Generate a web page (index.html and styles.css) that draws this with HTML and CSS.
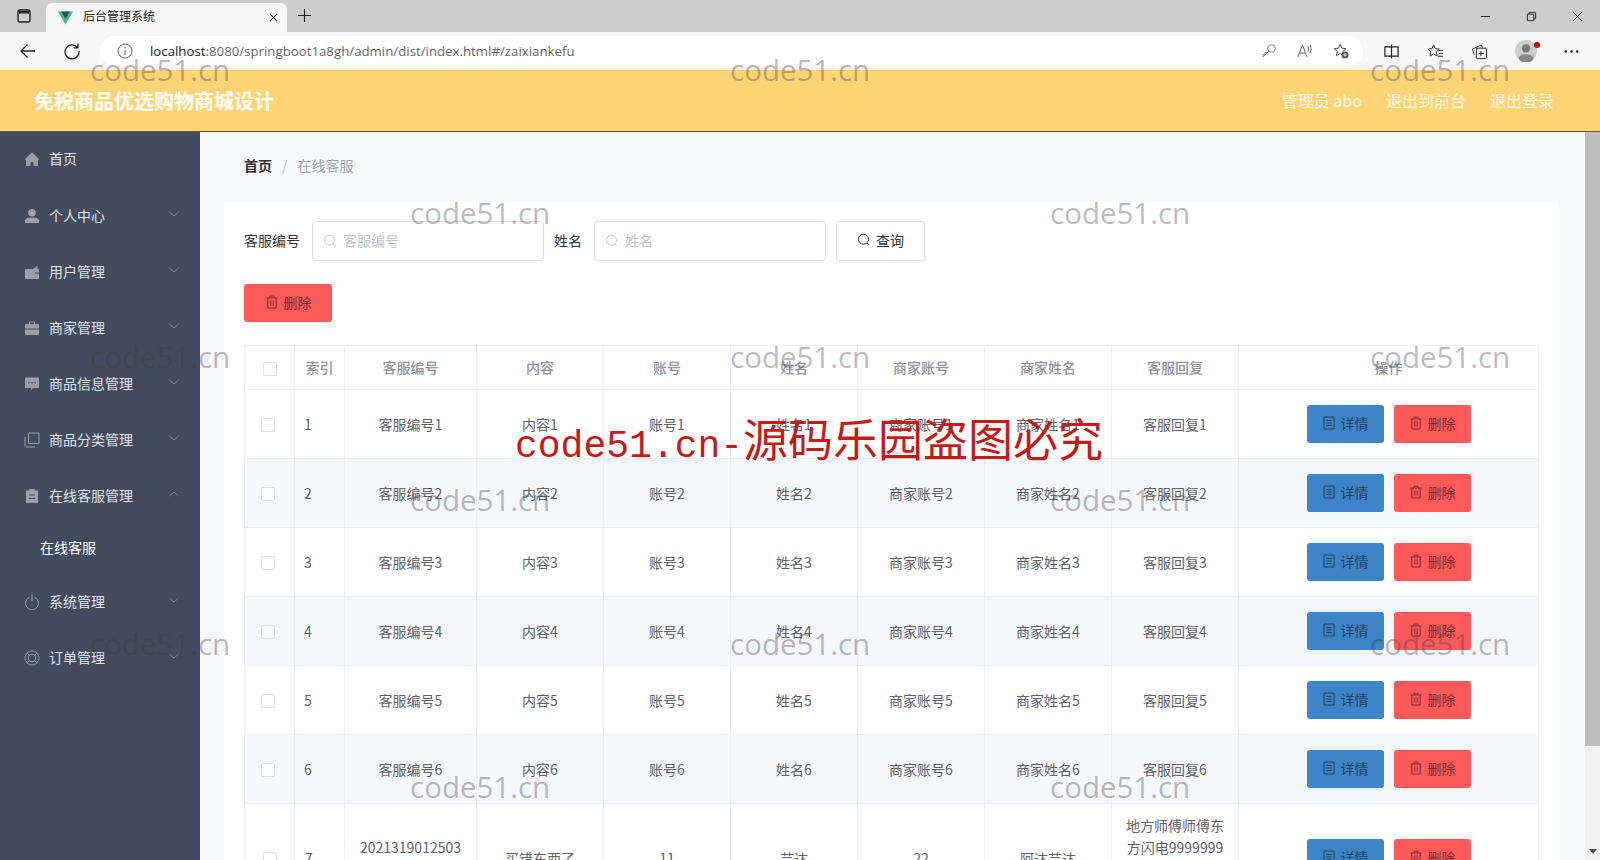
FILE: index.html
```html
<!DOCTYPE html>
<html lang="zh-CN">
<head>
    <meta charset="UTF-8">
    <title>后台管理系统</title>
    <link rel="stylesheet" href="styles.css">
</head>
<body>

    <svg class="sprites" width="0" height="0">
        <symbol id="i-search" viewBox="0 0 14 14"><circle cx="6.5" cy="6.2" r="5" fill="none" stroke="currentColor"/><path d="M10 10l2 2.4" fill="none" stroke="currentColor"/></symbol>
        <symbol id="i-trash" viewBox="0 0 14 14"><path d="M1.5 3h11M5 3V1.2h4V3M2.8 3v10h8.400V3M5.800 5.500v5M8.200 5.500v5" fill="none" stroke="currentColor"/></symbol>
        <symbol id="i-doc" viewBox="0 0 14 14"><path d="M2 1h10v12H2zM4.500 4.500h5M4.500 7h5M4.500 9.500h5" fill="none" stroke="currentColor"/></symbol>
        <symbol id="i-down" viewBox="0 0 12 12"><path d="M1.500 4l4.500 4 4.500-4" fill="none" stroke="currentColor"/></symbol>
    </svg>

    <div class="tabbar">
        <svg class="win-icon" viewBox="0 0 16 16"><rect x="2" y="2" width="12" height="12" rx="2" fill="none" stroke="#222" stroke-width="1.400"/><path d="M3 3h10v2.500H3z" fill="#222"/></svg>
        <div class="tab">
            <svg class="tab-logo" viewBox="0 0 16 14"><path d="M0 0h16L8 14z" fill="#41b883"/><path d="M3.500 0h9L8 7.800z" fill="#35495e"/></svg>
            <span class="tab-title">后台管理系统</span>
            <svg class="tab-close" viewBox="0 0 10 10"><path d="M1 1l8 8M9 1L1 9" stroke="#222" stroke-width="1.200"/></svg>
        </div>
        <svg class="tab-new" viewBox="0 0 16 16"><path d="M8 1v14M1 8h14" stroke="#222" stroke-width="1.200"/></svg>
        <div class="win-controls">
            <svg viewBox="0 0 12 12"><path d="M1 6h10" stroke="#222"/></svg>
            <svg viewBox="0 0 12 12"><path d="M1.500 3.500h7v7h-7zM3.500 3.500v-2h7v7h-2" fill="none" stroke="#222"/></svg>
            <svg viewBox="0 0 12 12"><path d="M1 1l10 10M11 1L1 11" stroke="#222"/></svg>
        </div>
    </div>

    <div class="toolbar">
        <svg class="nav-icon" viewBox="0 0 18 18"><path d="M16 9H2M8.500 2.500L2 9l6.500 6.500" fill="none" stroke="#222" stroke-width="1.300"/></svg>
        <svg class="nav-icon" viewBox="0 0 18 18"><path d="M14.500 5.500A7 7 0 1 0 16 9M15 1.500v4.300h-4.300" fill="none" stroke="#222" stroke-width="1.300"/></svg>
        <div class="address">
            <svg class="addr-info" viewBox="0 0 16 16"><circle cx="8" cy="8" r="7" fill="none" stroke="#555"/><path d="M8 7v5M8 4v1.500" stroke="#555"/></svg>
            <span class="addr-url"><b>localhost</b>:8080/springboot1a8gh/admin/dist/index.html#/zaixiankefu</span>
            <div class="addr-tools">
                <svg viewBox="0 0 16 16"><circle cx="10.500" cy="5.500" r="3.800" fill="none" stroke="#888"/><path d="M7.800 8.200L2 14v-2.500h2v-2h2" fill="none" stroke="#888"/></svg>
                <svg viewBox="0 0 16 16"><path d="M1 14L5.500 2 10 14M2.800 10h5.400M11 3.500a5 5 0 0 1 0 5M13 2a7 7 0 0 1 0 8" fill="none" stroke="#666"/></svg>
                <svg viewBox="0 0 18 18"><path d="M8 1.500l2 4.300 4.600.6-3.400 3.200.9 4.600L8 11.900l-4.100 2.300.9-4.600L1.400 6.400 6 5.800z" fill="none" stroke="#333"/><circle cx="13.500" cy="13.500" r="4" fill="#555"/><path d="M11.500 13.500h4M13.500 11.500v4" stroke="#fff"/></svg>
            </div>
        </div>
        <div class="tool-icons">
            <svg viewBox="0 0 18 18"><path d="M2 4h14v10H2zM9 1.500v15" fill="none" stroke="#222" stroke-width="1.300"/></svg>
            <svg viewBox="0 0 18 18"><path d="M7 2l1.800 4 4.200.5-3.100 2.900.8 4.300L7 11.600l-3.700 2.100.8-4.300L1 6.500 5.200 6zM12 8h5M12.500 11h4.500M11.500 14h5.500" fill="none" stroke="#222"/></svg>
            <svg viewBox="0 0 18 18"><path d="M6 5.500h9.500a1 1 0 0 1 1 1v9a1 1 0 0 1-1 1H6.500a1 1 0 0 1-1-1zM10.500 8.500v5.500M8 11.200h5.500M3.500 12.500l-2-6L11 2l1.200 3" fill="none" stroke="#222"/></svg>
            <span class="profile"><svg viewBox="0 0 24 24"><circle cx="12" cy="12" r="12" fill="#ccc"/><circle cx="12" cy="9" r="4.500" fill="#777"/><ellipse cx="12" cy="20" rx="8" ry="4.500" fill="#888"/></svg><i class="profile-dot"></i></span>
            <svg class="tool-more" viewBox="0 0 18 18"><circle cx="3" cy="9" r="1.300" fill="#222"/><circle cx="9" cy="9" r="1.300" fill="#222"/><circle cx="15" cy="9" r="1.300" fill="#222"/></svg>
        </div>
    </div>

    <header class="app-header">
        <div class="app-title">免税商品优选购物商城设计</div>
        <nav class="app-links">
            <span>管理员 abo</span>
            <span>退出到前台</span>
            <span>退出登录</span>
        </nav>
    </header>

    <div class="app-body">
        <aside class="sidebar">
            <div class="menu-item">
                <svg class="menu-icon" viewBox="0 0 16 16"><path d="M8 1.500L.5 8.500 2 9v6h4.500v-4h3v4H14V9l1.500-.5z" fill="currentColor"/></svg>
                <span>首页</span>
            </div>
            <div class="menu-item">
                <svg class="menu-icon" viewBox="0 0 16 16"><circle cx="8" cy="4.800" r="3.800" fill="currentColor"/><path d="M1 15v-2.500C1 10.500 3 9.500 8 9.500s7 1 7 3V15z" fill="currentColor"/></svg>
                <span>个人中心</span>
                <svg class="menu-arrow"><use href="#i-down"/></svg>
            </div>
            <div class="menu-item">
                <svg class="menu-icon" viewBox="0 0 16 16"><path d="M1 5h8l4-3 1 3h1v10H1z" fill="currentColor"/><path d="M11 9h4" stroke="#434c5e"/></svg>
                <span>用户管理</span>
                <svg class="menu-arrow"><use href="#i-down"/></svg>
            </div>
            <div class="menu-item">
                <svg class="menu-icon" viewBox="0 0 16 16"><path d="M5 4V1.500h6V4h4v4.500H1V4zM6 4h4V2.500H6zM1 9.500h14V15H1z" fill="currentColor" fill-rule="evenodd"/></svg>
                <span>商家管理</span>
                <svg class="menu-arrow"><use href="#i-down"/></svg>
            </div>
            <div class="menu-item">
                <svg class="menu-icon" viewBox="0 0 16 16"><path d="M1 1.500h14V12H9l-2 2.500V12H1z" fill="currentColor"/><path d="M4 6.800h1.500M7.300 6.800h1.500M10.500 6.800H12" stroke="#434c5e" stroke-width="1.500"/></svg>
                <span>商品信息管理</span>
                <svg class="menu-arrow"><use href="#i-down"/></svg>
            </div>
            <div class="menu-item">
                <svg class="menu-icon" viewBox="0 0 16 16"><path d="M4.500 1h10.500v10.500H4.500zM1 5v8.500a1.500 1.500 0 0 0 1.500 1.500H11" fill="none" stroke="currentColor"/></svg>
                <span>商品分类管理</span>
                <svg class="menu-arrow"><use href="#i-down"/></svg>
            </div>
            <div class="menu-item">
                <svg class="menu-icon" viewBox="0 0 16 16"><path d="M2 2.500h3V1h6v1.500h3V15H2z" fill="currentColor"/><path d="M5 7h6M5 10.500h6" stroke="#434c5e"/></svg>
                <span>在线客服管理</span>
                <svg class="menu-arrow menu-arrow-up"><use href="#i-down"/></svg>
            </div>
            <div class="submenu-item">在线客服</div>
            <div class="menu-item">
                <svg class="menu-icon" viewBox="0 0 16 16"><path d="M5 3.500a6.500 6.500 0 1 0 6 0M8 .5v7" fill="none" stroke="currentColor"/></svg>
                <span>系统管理</span>
                <svg class="menu-arrow"><use href="#i-down"/></svg>
            </div>
            <div class="menu-item">
                <svg class="menu-icon" viewBox="0 0 16 16"><circle cx="8" cy="8" r="7" fill="none" stroke="currentColor"/><circle cx="8" cy="8" r="3.800" fill="none" stroke="currentColor"/><path d="M3 3l2.300 2.300M13 3l-2.300 2.300M3 13l2.300-2.300M13 13l-2.300-2.300" stroke="currentColor"/></svg>
                <span>订单管理</span>
                <svg class="menu-arrow"><use href="#i-down"/></svg>
            </div>
        </aside>

        <main class="content">
            <div class="breadcrumb">
                <b>首页</b>
                <i>/</i>
                <span>在线客服</span>
            </div>

            <section class="card">
                <form class="search-form">
                    <label>客服编号</label>
                    <div class="search-input">
                        <svg class="ico"><use href="#i-search"/></svg>
                        <span>客服编号</span>
                    </div>
                    <label>姓名</label>
                    <div class="search-input">
                        <svg class="ico"><use href="#i-search"/></svg>
                        <span>姓名</span>
                    </div>
                    <button type="button" class="btn btn-plain btn-search"><svg class="ico"><use href="#i-search"/></svg>查询</button>
                </form>

                <div class="bulk-actions">
                    <button type="button" class="btn btn-red"><svg class="ico"><use href="#i-trash"/></svg>删除</button>
                </div>

                <table class="data-table">
                    <colgroup>
                        <col class="col-check">
                        <col class="col-index">
                        <col class="col-code">
                        <col class="col-std">
                        <col class="col-std">
                        <col class="col-std">
                        <col class="col-std">
                        <col class="col-std">
                        <col class="col-std">
                        <col class="col-ops">
                    </colgroup>
                    <thead>
                        <tr>
                            <th><span class="checkbox"></span></th>
                            <th>索引</th>
                            <th>客服编号</th>
                            <th>内容</th>
                            <th>账号</th>
                            <th>姓名</th>
                            <th>商家账号</th>
                            <th>商家姓名</th>
                            <th>客服回复</th>
                            <th>操作</th>
                        </tr>
                    </thead>
                    <tbody>
                        <tr>
                            <td class="cell-check"><span class="checkbox"></span></td>
                            <td class="cell-index">1</td>
                            <td>客服编号1</td><td>内容1</td><td>账号1</td><td>姓名1</td><td>商家账号1</td><td>商家姓名1</td><td>客服回复1</td>
                            <td><button type="button" class="btn btn-blue"><svg class="ico"><use href="#i-doc"/></svg>详情</button><button type="button" class="btn btn-red"><svg class="ico"><use href="#i-trash"/></svg>删除</button></td>
                        </tr>
                        <tr>
                            <td class="cell-check"><span class="checkbox"></span></td>
                            <td class="cell-index">2</td>
                            <td>客服编号2</td><td>内容2</td><td>账号2</td><td>姓名2</td><td>商家账号2</td><td>商家姓名2</td><td>客服回复2</td>
                            <td><button type="button" class="btn btn-blue"><svg class="ico"><use href="#i-doc"/></svg>详情</button><button type="button" class="btn btn-red"><svg class="ico"><use href="#i-trash"/></svg>删除</button></td>
                        </tr>
                        <tr>
                            <td class="cell-check"><span class="checkbox"></span></td>
                            <td class="cell-index">3</td>
                            <td>客服编号3</td><td>内容3</td><td>账号3</td><td>姓名3</td><td>商家账号3</td><td>商家姓名3</td><td>客服回复3</td>
                            <td><button type="button" class="btn btn-blue"><svg class="ico"><use href="#i-doc"/></svg>详情</button><button type="button" class="btn btn-red"><svg class="ico"><use href="#i-trash"/></svg>删除</button></td>
                        </tr>
                        <tr>
                            <td class="cell-check"><span class="checkbox"></span></td>
                            <td class="cell-index">4</td>
                            <td>客服编号4</td><td>内容4</td><td>账号4</td><td>姓名4</td><td>商家账号4</td><td>商家姓名4</td><td>客服回复4</td>
                            <td><button type="button" class="btn btn-blue"><svg class="ico"><use href="#i-doc"/></svg>详情</button><button type="button" class="btn btn-red"><svg class="ico"><use href="#i-trash"/></svg>删除</button></td>
                        </tr>
                        <tr>
                            <td class="cell-check"><span class="checkbox"></span></td>
                            <td class="cell-index">5</td>
                            <td>客服编号5</td><td>内容5</td><td>账号5</td><td>姓名5</td><td>商家账号5</td><td>商家姓名5</td><td>客服回复5</td>
                            <td><button type="button" class="btn btn-blue"><svg class="ico"><use href="#i-doc"/></svg>详情</button><button type="button" class="btn btn-red"><svg class="ico"><use href="#i-trash"/></svg>删除</button></td>
                        </tr>
                        <tr>
                            <td class="cell-check"><span class="checkbox"></span></td>
                            <td class="cell-index">6</td>
                            <td>客服编号6</td><td>内容6</td><td>账号6</td><td>姓名6</td><td>商家账号6</td><td>商家姓名6</td><td>客服回复6</td>
                            <td><button type="button" class="btn btn-blue"><svg class="ico"><use href="#i-doc"/></svg>详情</button><button type="button" class="btn btn-red"><svg class="ico"><use href="#i-trash"/></svg>删除</button></td>
                        </tr>
                        <tr class="row-long">
                            <td class="cell-check"><span class="checkbox"></span></td>
                            <td class="cell-index">7</td>
                            <td>2021319012503<br>&nbsp;</td><td>买错东西了</td><td>11</td><td>芸达</td><td>22</td><td>阿达芸达</td><td>地方师傅师傅东<br>方闪电9999999<br>&nbsp;<br>&nbsp;</td>
                            <td><button type="button" class="btn btn-blue"><svg class="ico"><use href="#i-doc"/></svg>详情</button><button type="button" class="btn btn-red"><svg class="ico"><use href="#i-trash"/></svg>删除</button></td>
                        </tr>
                    </tbody>
                </table>
            </section>
        </main>

        <div class="scrollbar">
            <div class="scrollbar-thumb"></div>
            <div class="scrollbar-arrow"></div>
        </div>
    </div>

    <!-- watermark stamped over the screenshot -->
    <div class="marks">
        <span class="mark mark-a">code51.cn</span>
        <span class="mark mark-b">code51.cn</span>
        <span class="mark mark-c">code51.cn</span>
        <span class="mark mark-d">code51.cn</span>
        <span class="mark mark-e">code51.cn</span>
        <span class="mark mark-f">code51.cn</span>
        <span class="mark mark-g">code51.cn</span>
        <span class="mark mark-h">code51.cn</span>
        <span class="mark mark-i">code51.cn</span>
        <span class="mark mark-j">code51.cn</span>
        <span class="mark mark-k">code51.cn</span>
        <span class="mark mark-l">code51.cn</span>
        <span class="mark mark-m">code51.cn</span>
        <span class="mark mark-n">code51.cn</span>
        <span class="mark mark-o">code51.cn</span>
        <span class="mark-big"><em>code51.cn-</em>源码乐园盗图必究</span>
    </div>

</body>
</html>
```

FILE: styles.css
```css
* {
    box-sizing: border-box;
}
html,
body {
    margin: 0;
    padding: 0;
    height: 860px;
    overflow: hidden;
}
body {
    display: flex;
    flex-direction: column;
    position: relative;
    font-family: "Noto Sans CJK SC", "Noto Sans", sans-serif;
    font-size: 14px;
    color: #606266;
    background-color: #f7f8fa;
}
.sprites {
    position: absolute;
}

/* browser chrome */
.tabbar {
    display: flex;
    align-items: flex-end;
    flex: 0 0 32px;
    background-color: #cdcdcd;
}
.win-icon {
    width: 16px;
    height: 16px;
    margin: 0 14px 8px 16px;
}
.tab {
    display: flex;
    align-items: center;
    width: 241px;
    height: 29px;
    padding: 0 7px 0 12px;
    background-color: #f7f7f7;
    border-radius: 6px 6px 0 0;
    color: #222;
}
.tab-logo {
    width: 15px;
    height: 14px;
}
.tab-title {
    flex: 1;
    margin: 0 0 4px 10px;
    font-size: 12px;
}
.tab-close {
    width: 9px;
    height: 9px;
    margin-right: 2px;
}
.tab-new {
    width: 15px;
    height: 15px;
    margin: 0 0 9px 10px;
}
.win-controls {
    display: flex;
    gap: 35px;
    margin: 0 17px 10px auto;
}
.win-controls svg {
    width: 11px;
    height: 11px;
}
.toolbar {
    display: flex;
    align-items: center;
    flex: 0 0 38px;
    background-color: #f7f7f7;
    padding-left: 19px;
}
.nav-icon {
    flex: none;
    width: 18px;
    height: 18px;
    margin-right: 26px;
}
.address {
    display: flex;
    align-items: center;
    flex: none;
    width: 1263px;
    height: 30px;
    margin-left: -7px;
    padding: 0 14px 0 17px;
    background-color: #fff;
    border-radius: 15px;
}
.addr-info {
    width: 16px;
    height: 16px;
}
.addr-url {
    margin-left: 17px;
    font-family: "Open Sans", "Noto Sans", sans-serif;
    font-size: 13.25px;
    color: #666;
}
.addr-url b {
    font-weight: 400;
    color: #222;
}
.addr-tools {
    display: flex;
    align-items: center;
    gap: 20px;
    margin-left: auto;
}
.addr-tools svg {
    width: 16px;
    height: 16px;
}
.tool-icons {
    display: flex;
    align-items: center;
    margin-left: 20px;
}
.tool-icons svg {
    width: 17px;
    height: 17px;
    margin-right: 27px;
}
.tool-icons .profile {
    display: block;
    position: relative;
    width: 22px;
    height: 22px;
    margin-right: 26px;
}
.profile svg {
    display: block;
    width: 22px;
    height: 22px;
}
.profile-dot {
    position: absolute;
    right: -3px;
    top: 2px;
    width: 6px;
    height: 6px;
    border-radius: 50%;
    background-color: #c00;
}
.tool-icons .tool-more {
    margin-right: 0;
}

/* app header */
.app-header {
    display: flex;
    align-items: center;
    justify-content: space-between;
    flex: 0 0 62px;
    padding: 0 46px 0 34px;
    background-color: #ffd476;
    border-bottom: 1px solid #6b5a35;
    color: #fff;
}
.app-title {
    font-size: 20px;
    font-weight: 700;
}
.app-links {
    display: flex;
    gap: 24px;
    margin-bottom: 2px;
    font-size: 16px;
    color: rgba(255, 255, 255, 0.85);
}

/* layout */
.app-body {
    display: flex;
    flex: 1;
    min-height: 0;
}
.sidebar {
    flex: 0 0 200px;
    background-color: #434c5e;
    color: #dfe3ea;
}
.menu-item {
    display: flex;
    align-items: center;
    height: 56px;
    padding: 0 20px 0 24px;
}
.menu-item:first-child {
    padding-bottom: 2px;
}
.menu-item span {
    flex: 1;
    margin-left: 9px;
    padding-bottom: 2px;
}
.menu-icon {
    width: 16px;
    height: 16px;
    color: #9a9ea7;
}
.menu-arrow {
    width: 12px;
    height: 12px;
    margin-top: -4px;
    color: #7f8694;
}
.menu-arrow-up {
    transform: rotate(180deg);
}
.submenu-item {
    height: 50px;
    padding-left: 40px;
    line-height: 46px;
    color: #fff;
}
.content {
    flex: 1;
    min-width: 0;
    padding: 0 26px 0 24px;
    overflow: hidden;
}
.breadcrumb {
    display: flex;
    align-items: center;
    gap: 10px;
    height: 69px;
    padding: 0 0 4px 20px;
    color: #97a8be;
}
.breadcrumb b {
    color: #303133;
}
.breadcrumb i {
    font-style: normal;
    color: #c0c4cc;
}
.card {
    padding: 20px;
    background-color: #fff;
}
.search-form {
    display: flex;
    align-items: center;
    height: 40px;
}
.search-form label {
    margin-right: 12px;
    padding-bottom: 2px;
    color: #303133;
}
.search-input {
    display: flex;
    align-items: center;
    gap: 6px;
    width: 232px;
    height: 40px;
    margin-right: 10px;
    padding: 0 10px;
    border: 1px solid #dcdfe6;
    border-radius: 4px;
    color: #c0c4cc;
}
.search-input span {
    padding-bottom: 2px;
}
.ico {
    width: 14px;
    height: 14px;
    flex: none;
}
.btn {
    display: inline-flex;
    align-items: center;
    justify-content: center;
    gap: 5px;
    width: 77px;
    height: 38px;
    padding: 0 0 2px;
    border: 1px solid transparent;
    border-radius: 3px;
    font-family: inherit;
    font-size: 14px;
}
.btn-plain {
    background-color: #fff;
    border-color: #dcdfe6;
    color: #303133;
}
.btn-search {
    width: 89px;
    height: 40px;
}
.btn-red {
    background-color: #ff5a5a;
    color: #7d2b33;
}
.btn-blue {
    background-color: #3d85c6;
    color: #1f3f61;
}
.bulk-actions {
    margin-top: 23px;
}
.bulk-actions .btn {
    width: 88px;
}
.data-table {
    width: 1294px;
    margin-top: 23px;
    border-collapse: collapse;
    table-layout: fixed;
    border: 1px solid #ebeef5;
}
.col-check {
    width: 50px;
}
.col-index {
    width: 50px;
}
.col-code {
    width: 132px;
}
.col-std {
    width: 127px;
}
.col-ops {
    width: 300px;
}
.data-table th,
.data-table td {
    border: 1px solid #ebeef5;
    text-align: center;
    line-height: 22px;
}
.data-table th {
    height: 44px;
    padding: 0 8px 2px;
    font-weight: 500;
    color: #909399;
}
.data-table td {
    height: 69px;
    padding: 12px 10px;
}
.data-table .row-long td {
    padding: 10px 10px 14px;
}
.data-table tbody tr:nth-child(even) td {
    background-color: #f5f7fa;
}
.data-table .btn + .btn {
    margin-left: 10px;
}
.data-table .cell-index {
    padding-left: 9px;
    text-align: left;
}
.data-table .cell-check {
    padding-right: 14px;
}
.cell-check .checkbox {
    margin-bottom: 2px;
}
.checkbox {
    display: inline-block;
    width: 14px;
    height: 14px;
    vertical-align: middle;
    background-color: #fff;
    border: 1px solid #dcdfe6;
    border-radius: 2px;
}

/* fake page scrollbar */
.scrollbar {
    position: relative;
    flex: 0 0 15px;
    background-color: #f1f1f1;
}
.scrollbar-thumb {
    height: 614px;
    background-color: #bdbdbd;
}
.scrollbar-arrow {
    position: absolute;
    left: 4px;
    bottom: 6px;
    border-style: solid;
    border-width: 5px 4px 0;
    border-color: #505050 transparent transparent;
}

/* watermark */
.marks {
    position: absolute;
    inset: 0;
    pointer-events: none;
}
.mark {
    position: absolute;
    font-family: "Open Sans", "Noto Sans", sans-serif;
    font-size: 29.5px;
    line-height: 1;
    color: rgba(60, 60, 60, 0.36);
}
.mark-a { left: 90px; top: 55px; }
.mark-b { left: 730px; top: 55px; }
.mark-c { left: 1370px; top: 55px; }
.mark-d { left: 410px; top: 198px; }
.mark-e { left: 1050px; top: 198px; }
.mark-f { left: 90px; top: 342px; }
.mark-g { left: 730px; top: 342px; }
.mark-h { left: 1370px; top: 342px; }
.mark-i { left: 410px; top: 485px; }
.mark-j { left: 1050px; top: 485px; }
.mark-k { left: 90px; top: 629px; }
.mark-l { left: 730px; top: 629px; }
.mark-m { left: 1370px; top: 629px; }
.mark-n { left: 410px; top: 772px; }
.mark-o { left: 1050px; top: 772px; }
.mark-big {
    position: absolute;
    left: 515px;
    top: 408px;
    font-size: 45px;
    line-height: 60px;
    white-space: nowrap;
    color: #c41a1a;
}
.mark-big em {
    font-family: "Liberation Mono", monospace;
    font-size: 38px;
    font-style: normal;
}
```
